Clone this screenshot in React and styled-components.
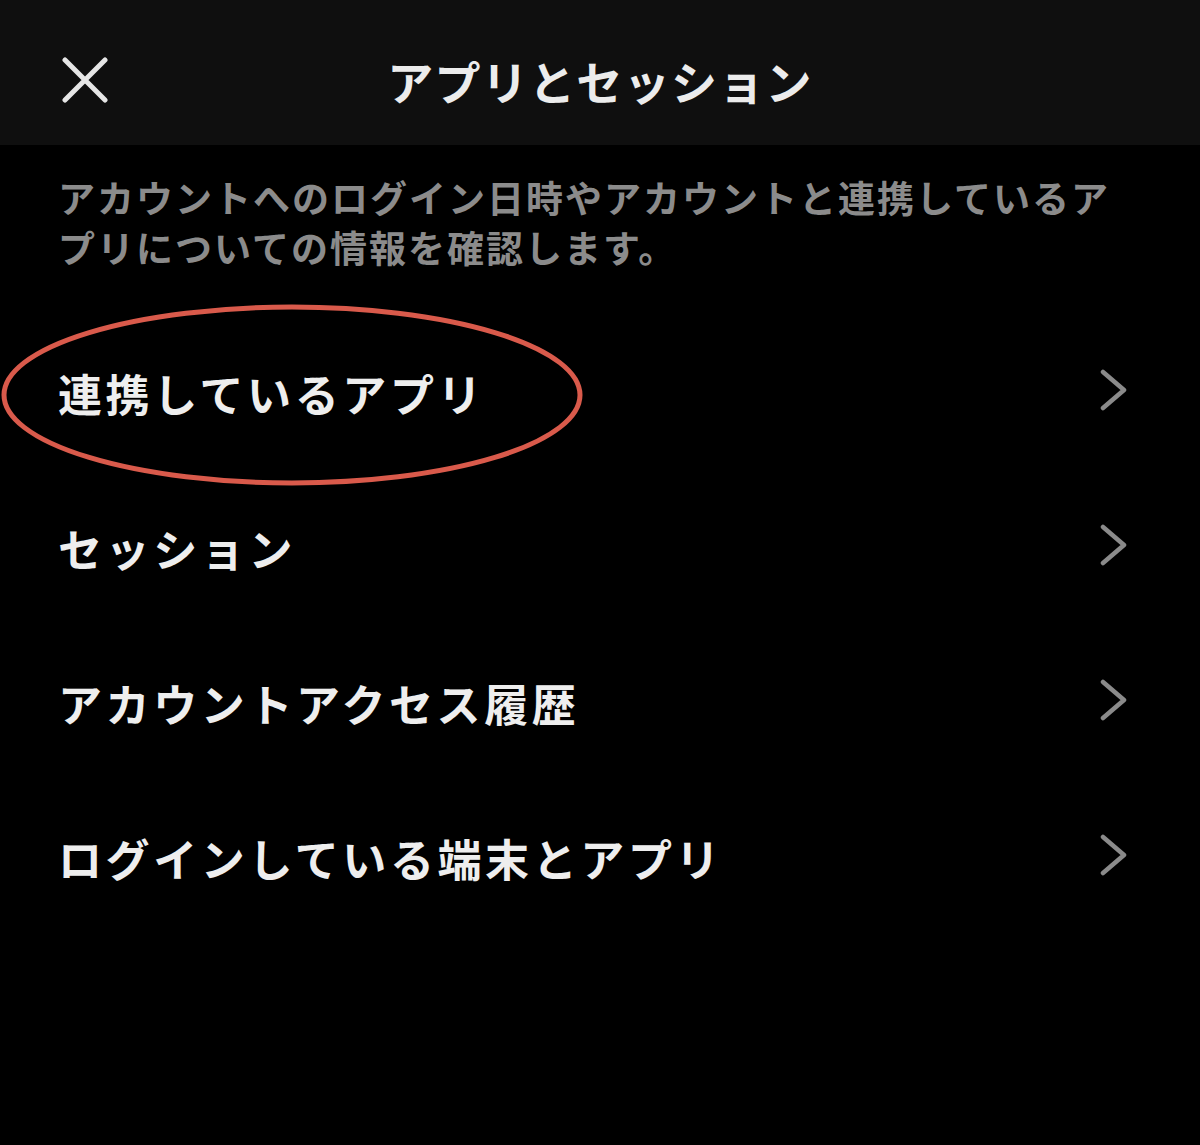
import React from "react";
import styled, { createGlobalStyle } from "styled-components";

const Global = createGlobalStyle`
  html, body { margin: 0; padding: 0; background: #000; }
  body { font-family: "Noto Sans CJK JP", "Noto Sans", sans-serif; }
`;

const Page = styled.div`
  position: relative;
  width: 1200px;
  height: 1145px;
  background: #000;
  overflow: hidden;
`;

const Header = styled.header`
  height: 145px;
  background: #0f0f0f;
  display: grid;
  grid-template-columns: 160px 1fr 160px;
  align-items: center;
  padding-top: 14px;
  box-sizing: border-box;
`;

const CloseButton = styled.button`
  background: none;
  border: none;
  padding: 0 0 0 62px;
  display: flex;
  align-items: center;
  cursor: pointer;
`;

const Title = styled.h1`
  margin: 0;
  text-align: center;
  color: #ececec;
  font-size: 46px;
  font-weight: 700;
  letter-spacing: 1.3px;
  line-height: 1;
`;

const Description = styled.p`
  margin: 27px 60px 0 58px;
  color: #8b8b8b;
  font-size: 37px;
  font-weight: 700;
  letter-spacing: 2px;
  line-height: 50px;
`;

const Menu = styled.ul`
  list-style: none;
  margin: 43px 0 0;
  padding: 0;
`;

const Row = styled.li`
  height: 155px;
  display: flex;
  align-items: center;
  justify-content: space-between;
  padding: 0 72px 0 58px;
`;

const Label = styled.span`
  color: #eeeeee;
  font-size: 44px;
  font-weight: 700;
  letter-spacing: 3.6px;
`;

const Chevron = styled.svg`
  width: 28px;
  height: 42px;
  margin-top: -6px;
`;

const Annotation = styled.svg`
  position: absolute;
  left: 0;
  top: 300px;
  width: 590px;
  height: 190px;
  pointer-events: none;
`;

const items = [
  "連携しているアプリ",
  "セッション",
  "アカウントアクセス履歴",
  "ログインしている端末とアプリ",
];

export default function App() {
  return (
    <Page>
      <Global />
      <Header>
        <CloseButton aria-label="閉じる">
          <svg width="46" height="48" viewBox="0 0 46 48">
            <path d="M3 4 L43 44 M43 4 L3 44" stroke="#e6e6e6" strokeWidth="5" strokeLinecap="round" />
          </svg>
        </CloseButton>
        <Title>アプリとセッション</Title>
        <div />
      </Header>
      <Description>
        アカウントへのログイン日時やアカウントと連携しているアプリについての情報を確認します。
      </Description>
      <Menu>
        {items.map((t) => (
          <Row key={t}>
            <Label>{t}</Label>
            <Chevron viewBox="0 0 28 42">
              <path d="M3 3 L24 21 L3 39" fill="none" stroke="#8a8a8a" strokeWidth="4.5" strokeLinecap="round" strokeLinejoin="round" />
            </Chevron>
          </Row>
        ))}
      </Menu>
      <Annotation viewBox="0 0 590 190">
        <ellipse cx="292" cy="95" rx="288" ry="88" fill="none" stroke="#d95a4b" strokeWidth="5" />
      </Annotation>
    </Page>
  );
}
